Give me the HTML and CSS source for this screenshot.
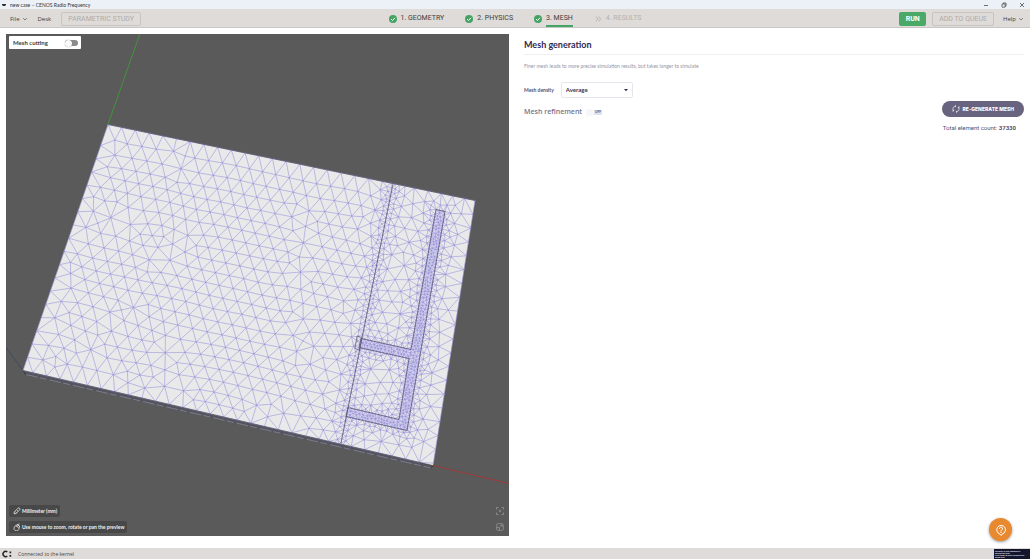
FILE: index.html
```html
<!DOCTYPE html>
<html lang="en">
<head>
<meta charset="utf-8">
<title>new case – CENOS Radio Frequency</title>
<link rel="stylesheet" href="styles.css">
</head>
<body>
<header class="titlebar">
  <svg class="app-icon" viewBox="0 0 6 6"><path d="M1 2h4v1L4 4H2L1 3z" fill="#333"/></svg>
  <span class="window-title">new case – CENOS Radio Frequency</span>
  <div class="window-controls">
    <button aria-label="Minimize"><svg viewBox="0 0 6 6"><path d="M1 3.5h4"/></svg></button>
    <button aria-label="Restore"><svg viewBox="0 0 6 6"><rect x="1" y="2" width="3.2" height="3.2" rx=".5"/><path d="M2 1.7V1h3v3.2h-.6"/></svg></button>
    <button aria-label="Close"><svg viewBox="0 0 6 6"><path d="M1 1l4 4M5 1L1 5"/></svg></button>
  </div>
</header>
<nav class="toolbar">
  <div class="tools">
    <button class="menu">File <svg class="chevron" viewBox="0 0 6 6"><path d="M1.2 2.2L3 4l1.8-1.8"/></svg></button>
    <button class="menu">Desk</button>
    <button class="outlined" disabled>PARAMETRIC STUDY</button>
  </div>
  <div class="steps">
    <button class="step"><svg viewBox="0 0 8 8"><circle cx="4" cy="4" r="4" fill="#43a463"/><path d="M2 4.1l1.5 1.4L6 2.8"/></svg><span>1. GEOMETRY</span></button>
    <button class="step"><svg viewBox="0 0 8 8"><circle cx="4" cy="4" r="4" fill="#43a463"/><path d="M2 4.1l1.5 1.4L6 2.8"/></svg><span>2. PHYSICS</span></button>
    <button class="step active"><svg viewBox="0 0 8 8"><circle cx="4" cy="4" r="4" fill="#43a463"/><path d="M2 4.1l1.5 1.4L6 2.8"/></svg><span>3. MESH</span></button>
    <button class="step pending" disabled><svg viewBox="0 0 8 8"><path d="M1.5 1.5h1l2 2.5-2 2.5h-1L3.200 4zM4.200 1.500h1l2 2.500-2 2.500h-1L5.900 4z"/></svg><span>4. RESULTS</span></button>
  </div>
  <div class="tools end">
    <button class="run">RUN</button>
    <button class="outlined" disabled>ADD TO QUEUE</button>
    <button class="menu">Help <svg class="chevron" viewBox="0 0 6 6"><path d="M1.200 2.200L3 4l1.800-1.800"/></svg></button>
  </div>
</nav>
<main class="workspace">
  <section class="viewport" aria-label="Mesh preview">
    <svg class="scene" viewBox="6 34 503 503" preserveAspectRatio="xMidYMid slice">
      <path d="M108 125L140 34" stroke="#3f9a3a" stroke-width=".9"/>
      <path d="M0 340L23 371" stroke="#34495e" stroke-width=".7"/>
      <path d="M433 466L515 485.500" stroke="#b03030" stroke-width=".8"/>
      <path d="M23 371L433 466L431 469L26 375.500Z" fill="#54545c"/>
      <path d="M26 375L431 468.500" stroke="#8d8ca8" stroke-width=".7" stroke-dasharray="12 2 7 3"/>
      <path d="M23 371L26 375.500M433 466L431 469" stroke="#222" stroke-width=".6"/>
      <path d="M108 125L475 201L433 466L23 371Z" fill="#e9e9ea"/>
      <path d="M436 210L445 212L407 431L346 417L348 408L399 420L409 359L359 348L361 339L411 350Z" fill="#d8d6ee"/>
      <path id="mesh" fill="none" stroke="#9a95da" stroke-width=".6"/>
      <path id="nodes" fill="none" stroke="#8f89d6" stroke-width="1.400" stroke-linecap="round" stroke-opacity=".5"/>
      <g fill="none" stroke="#55536a" stroke-width=".7">
        <path d="M393 184L341 443.500"/>
        <path d="M436 210L445 212L407 431L346 417L348 408L399 420L409 359L359 348L361 339L411 350Z"/>
        <path d="M357 336.500L362 338L359.500 350.500L355 349Z"/>
      </g>
      <path d="M108 125L475 201M23 371L433 466" stroke="#333" stroke-width=".5"/>
    </svg>
    <div class="overlay">
      <label class="cutting">Mesh cutting <input type="checkbox" class="toggle"></label>
      <div class="overlay-bottom">
        <div class="chips">
          <button class="chip"><svg viewBox="0 0 8 8"><path d="M1 6.800l.4-2L5 1.200a1 1 0 0 1 1.500 0l.2.2a1 1 0 0 1 0 1.500L3 6.500zM2.500 4.800l1 .9M4 3.300l1 .9"/></svg>Millimeter (mm)</button>
          <div class="chip"><svg viewBox="0 0 8 8"><path d="M1.200 4.500a2.500 2.500 0 1 0 4.800 1L6.600 3 4 1.800 1.600 3.500zM2.800 2.700L5.500 4.700M4 1.800L6.500.8M4.500 3.500l1-1"/></svg>Use mouse to zoom, rotate or pan the preview</div>
        </div>
        <div class="view-tools">
          <button aria-label="Center view"><svg viewBox="0 0 8 8"><path d="M.5 2.500v-2h2M5.500.5h2v2M7.500 5.500v2h-2M2.500 7.500h-2v-2"/><circle cx="4" cy="4" r=".8"/></svg></button>
          <button aria-label="Expand view"><svg viewBox="0 0 8 8"><rect x=".7" y=".7" width="6.600" height="6.600" rx="1"/><path d="M4.300 2h1.800v1.800M6 2L4.200 3.800M.8 4.500h2.700v2.700"/></svg></button>
        </div>
      </div>
    </div>
  </section>
  <section class="settings">
    <h1>Mesh generation</h1>
    <p class="hint">Finer mesh leads to more precise simulation results, but takes longer to simulate</p>
    <div class="columns">
      <div class="fields">
        <div class="field">
          <label for="density">Mesh density</label>
          <div class="select">
            <select id="density"><option>Average</option></select>
            <svg viewBox="0 0 6 6"><path d="M1 2h4L3 4.300z"/></svg>
          </div>
        </div>
        <div class="refine">
          <h2 id="refinement">Mesh refinement</h2>
          <button class="switch" role="switch" aria-checked="false" aria-labelledby="refinement"><i></i><span>OFF</span></button>
        </div>
      </div>
      <div class="actions">
        <button class="regenerate"><svg viewBox="0 0 9 9"><path d="M1.800 6.800C.2 4.800 1 1.500 4.400 1.300M3.200.2l1.200 1.100-1.100 1.200M7.200 2.200C8.800 4.200 8 7.500 4.600 7.700M5.800 8.800L4.600 7.700l1.100-1.200M1.800 6.800v-1.600M1.800 6.800H.3M7.200 2.200v1.600M7.200 2.200h1.500"/></svg>RE-GENERATE MESH</button>
        <p>Total element count: <b>37330</b></p>
      </div>
    </div>
    <button class="help" aria-label="Help"><svg viewBox="0 0 12 12"><path d="M6 11.200L4.800 10A4.400 4.400 0 1 1 7.500 10zM4.500 4.600a1.500 1.500 0 1 1 2.200 1.300Q6 6.300 6 7"/><path d="M6 8.200v.4"/></svg></button>
  </section>
</main>
<footer class="status">
  <svg class="brand" viewBox="0 0 12 8"><path d="M6.300 2A2.600 2.600 0 1 0 6.300 6" fill="none" stroke="#222" stroke-width="1.500"/><path d="M8.500 1.500h1.700v1.700H8.500zM8.500 5h1.700v1.700H8.500z" fill="#222"/></svg>
  <span>Connected to the kernel</span>
  <div class="thumbnail">Security or site padding of<br>supporting test<br>GHz today at next element test<br>Show text</div>
</footer>
<script src="mesh.js"></script>
</body>
</html>
```
FILE: styles.css
```css
* { box-sizing: border-box; }
html, body { height: 100%; }
body {
  margin: 0;
  display: flex;
  flex-direction: column;
  background: #fff;
  color: #3d3d3d;
  font: 6px/8px Lato, "Open Sans", sans-serif;
}
button, select, input { font: inherit; color: inherit; margin: 0; }
button { border: 0; padding: 0; background: none; }
svg { display: block; flex: none; }

.titlebar {
  flex: none;
  height: 9px;
  display: flex;
  align-items: center;
  gap: 3px;
  padding: 0 5px 0 1px;
  background: #ebf1f6;
  color: #333;
}
.app-icon { width: 6px; height: 6px; }
.window-title { font-size: 5px; font-family: Lato, sans-serif; }
.window-controls { margin-left: auto; display: flex; gap: 12px; }
.window-controls svg { width: 6px; height: 6px; fill: none; stroke: #333; stroke-width: .7; }

.toolbar {
  flex: none;
  height: 19px;
  display: grid;
  grid-template-columns: 1fr auto 1fr;
  align-items: center;
  padding-top: 1px;
  background: #dfdbd8;
  border-bottom: 1px solid #c9c6c4;
  font-family: Roboto, sans-serif;
}
.tools { display: flex; align-items: center; gap: 10px; padding-left: 10px; }
.tools.end { justify-content: flex-end; gap: 6px; padding: 0 6px 0 0; }
.tools.end .menu { margin-left: 3px; }
.menu { display: flex; align-items: center; gap: 2px; font-family: "Open Sans", sans-serif; }
.chevron { width: 6px; height: 6px; fill: none; stroke: #555; stroke-width: .7; }
.outlined {
  height: 14px;
  padding: 0 6px;
  border: 1px solid #c7c4c2;
  border-radius: 2px;
  color: #aeabaa;
  font-size: 7px;
}
.run {
  width: 27px;
  height: 14px;
  border-radius: 2px;
  background: #4aa967;
  color: #fff;
  font-size: 7px;
  font-weight: 700;
}
.steps { display: flex; gap: 21px; align-self: stretch; }
.step { display: flex; align-items: center; gap: 4px; font-size: 7px; }
.step svg { width: 8px; height: 8px; }
.step path { fill: none; stroke: #fff; stroke-width: 1; }
.step span { height: 17px; line-height: 17px; }
.step.active span { box-shadow: inset 0 -2px #43a463; }
.step.pending { color: #b4b1af; }
.step.pending path { fill: #bebbb9; stroke: none; }

.workspace {
  flex: 1;
  min-height: 0;
  display: grid;
  grid-template-columns: 503fr 507fr;
  gap: 14px;
  padding: 6px 0 12px 6px;
}
.viewport { position: relative; min-height: 0; background: #5a5a5a; overflow: hidden; }
.scene { position: absolute; width: 100%; height: 100%; }
.overlay {
  position: absolute;
  inset: 0;
  display: flex;
  flex-direction: column;
  justify-content: space-between;
  align-items: stretch;
  padding: 2px 3px 3px;
}
.cutting {
  align-self: flex-start;
  height: 13px;
  display: flex;
  align-items: center;
  gap: 17px;
  padding: 0 3px 0 4px;
  border-radius: 1px;
  background: #fff;
  font-weight: 700;
}
.toggle {
  appearance: none;
  width: 13px;
  height: 6px;
  border-radius: 3px;
  background: #8c8c8c;
}
.toggle::before {
  content: "";
  display: block;
  width: 7px;
  height: 7px;
  border-radius: 50%;
  background: #fafafa;
  box-shadow: 0 0 1px #777;
}
.overlay-bottom { display: flex; justify-content: space-between; align-items: flex-end; }
.chips { display: flex; flex-direction: column; align-items: flex-start; gap: 4px; }
.chip {
  height: 12px;
  display: flex;
  align-items: center;
  gap: 1px;
  padding: 0 3px 0 4px;
  border-radius: 2px;
  background: #484848;
  color: #f0f0f0;
  font: 700 5px/8px Lato, sans-serif;
}
.chip svg { width: 8px; height: 8px; fill: none; stroke: #fff; stroke-width: .7; }
.view-tools { display: flex; flex-direction: column; gap: 8px; padding: 0 2px 2px 0; }
.view-tools svg { width: 8px; height: 8px; fill: none; stroke: #9b9b9b; stroke-width: .7; }

.settings {
  position: relative;
  min-width: 0;
  padding: 5px 6px 0 1px;
  color: #55516f;
}
h1 {
  margin: 0;
  padding-bottom: 3px;
  border-bottom: 1px solid #f0f0f2;
  color: #2f2a51;
  font: 700 9px/12px Lato, sans-serif;
}
.hint { margin: 7px 0 12px; color: #96959f; font-size: 5px; }
.columns { display: flex; justify-content: space-between; align-items: flex-start; }
.field { display: flex; align-items: center; gap: 7px; font-size: 5px; font-weight: 700; }
.select { position: relative; width: 72px; }
.select select {
  appearance: none;
  width: 100%;
  height: 16px;
  padding: 0 4px;
  border: 1px solid #e6e6ec;
  border-radius: 2px;
  background: #fff;
  color: #38334f;
  font-size: 6px;
  font-weight: 700;
}
.select svg { position: absolute; right: 4px; top: 5px; width: 6px; height: 6px; fill: #38334f; pointer-events: none; }
.refine { display: flex; align-items: center; gap: 4px; margin-top: 8px; }
h2 { margin: 0; font: 600 7px/12px "Open Sans", sans-serif; color: #77748d; }
.switch {
  display: flex;
  align-items: center;
  height: 5px;
  background: #e3e2ea;
  border-radius: 1px;
  font-size: 3px;
  font-weight: 700;
}
.switch i { width: 8px; height: 7px; border-radius: 2px; background: #f7f7f9; }
.switch span { padding: 0 1px; }
.actions { display: flex; flex-direction: column; align-items: flex-end; padding-top: 19px; }
.regenerate {
  height: 16px;
  display: flex;
  align-items: center;
  gap: 3px;
  padding: 0 10px;
  border-radius: 8px;
  background: #68637f;
  color: #fff;
  font: 800 5px/8px Inter, sans-serif;
}
.regenerate svg { width: 8px; height: 8px; fill: none; stroke: #fff; stroke-width: .7; }
.actions p { margin: 7px 8px 0 0; font-family: Roboto, sans-serif; }
.help {
  position: absolute;
  right: 18px;
  bottom: -5px;
  width: 23px;
  height: 23px;
  display: grid;
  place-items: center;
  border-radius: 50%;
  background: #e9892f;
  box-shadow: 0 1px 3px rgba(0, 0, 0, .4);
}
.help svg { width: 12px; height: 12px; fill: none; stroke: #fff; stroke-width: 1; stroke-linecap: round; }

.status {
  flex: none;
  height: 11px;
  display: flex;
  align-items: center;
  gap: 5px;
  padding: 1px 0 0 1px;
  background: #dfdbd8;
  font-size: 5px;
  color: #444;
}
.status span { font-family: "Open Sans", sans-serif; }
.brand { width: 12px; height: 8px; }
.thumbnail {
  align-self: flex-end;
  width: 36px;
  height: 10px;
  margin-left: auto;
  overflow: hidden;
  white-space: nowrap;
  background: #14162e;
  color: #e4e6f2;
  font: 700 2px/2px "Liberation Sans", sans-serif;
  padding: 1px;
}
```
FILE: mesh.js
```js
// Builds a graded triangular surface mesh of the board and its antenna trace.
let seed = 11;
const rnd = () => (seed = (seed * 16807) % 2147483647) / 2147483647;
const board = [[108, 125], [475, 201], [433, 466], [23, 371]];
const trace = [[436, 210], [445, 212], [407, 431], [346, 417], [348, 408], [399, 420], [409, 359], [359, 348], [361, 339], [411, 350]];
const split = [[393, 184], [341, 443.5]];

function inside(poly, x, y) {
  let c = false;
  for (let i = 0, j = poly.length - 1; i < poly.length; j = i++) {
    const [a, b] = poly[i], [p, q] = poly[j];
    if (b > y !== q > y && x < ((p - a) * (y - b)) / (q - b) + a) c = !c;
  }
  return c;
}
function segDist(x, y, [a, b], [p, q]) {
  const dx = p - a, dy = q - b;
  const t = Math.max(0, Math.min(1, ((x - a) * dx + (y - b) * dy) / (dx * dx + dy * dy)));
  return Math.hypot(x - a - t * dx, y - b - t * dy);
}
function polyDist(x, y) {
  let d = 1e9;
  trace.forEach((p, i) => { d = Math.min(d, segDist(x, y, p, trace[(i + 1) % trace.length])); });
  return d;
}
function size(x, y) {
  if (inside(trace, x, y)) return 2.9;
  const s = segDist(x, y, split[0], split[1]);
  return Math.min(14, 3.6 + Math.max(0, polyDist(x, y) - 2) * 0.55, 4.4 + Math.max(0, s - 4) * 0.6);
}

const points = [];
const cells = new Map();
const cell = (x, y) => Math.floor(x / 14) * 1000 + Math.floor(y / 14);
function add(x, y, fixed, k = 0.85) {
  const r = size(x, y) * k;
  for (let i = -1; i < 2; i++) for (let j = -1; j < 2; j++)
    for (const p of cells.get(cell(x + i * 14, y + j * 14)) || [])
      if (Math.hypot(p.x - x, p.y - y) < r) return;
  const p = { x, y, fixed };
  points.push(p);
  const key = cell(x, y);
  if (!cells.has(key)) cells.set(key, []);
  cells.get(key).push(p);
}
function line(a, b) {
  const len = Math.hypot(b[0] - a[0], b[1] - a[1]);
  for (let s = 0; s < len;) {
    const x = a[0] + ((b[0] - a[0]) * s) / len, y = a[1] + ((b[1] - a[1]) * s) / len;
    add(x, y, true, 0.6);
    s += size(x, y);
  }
  add(b[0], b[1], true, 0.4);
}
board.forEach((p, i) => line(p, board[(i + 1) % 4]));
trace.forEach((p, i) => line(p, trace[(i + 1) % trace.length]));
line(split[0], split[1]);

// Regular rows in the open area, then random filling where the mesh is finer.
for (let v = 0.02; v < 1; v += 0.045)
  for (let u = (Math.round(v / 0.045) % 2) * 0.018 + 0.02; u < 1; u += 0.036) {
    const lx = 108 - 85 * v, ly = 125 + 246 * v, rx = 475 - 42 * v, ry = 201 + 265 * v;
    const x = lx + (rx - lx) * u + (rnd() - 0.5) * 6, y = ly + (ry - ly) * u + (rnd() - 0.5) * 6;
    if (inside(board, x, y) && size(x, y) > 12) add(x, y, false, 0.7);
  }
for (let i = 0; i < 30000; i++) {
  const x = 340 + rnd() * 110, y = 200 + rnd() * 235;
  if (inside(trace, x, y)) add(x, y, true);
}
for (let i = 0; i < 90000; i++) {
  const x = 23 + rnd() * 452, y = 125 + rnd() * 341;
  if (inside(board, x, y)) add(x, y, false);
}

function circle(a, b, c) {
  const p = points[a], q = points[b], r = points[c];
  const d = 2 * (p.x * (q.y - r.y) + q.x * (r.y - p.y) + r.x * (p.y - q.y)) || 1e-9;
  const P = p.x * p.x + p.y * p.y, Q = q.x * q.x + q.y * q.y, R = r.x * r.x + r.y * r.y;
  const x = (P * (q.y - r.y) + Q * (r.y - p.y) + R * (p.y - q.y)) / d;
  const y = (P * (r.x - q.x) + Q * (p.x - r.x) + R * (q.x - p.x)) / d;
  return { a, b, c, x, y, r: (p.x - x) ** 2 + (p.y - y) ** 2 };
}
function triangulate() {
  const n = points.length;
  const order = points.map((_, i) => i).sort((i, j) => points[i].x - points[j].x);
  points.push({ x: -9000, y: -8000 }, { x: 9000, y: -8100 }, { x: 310, y: 12000 });
  let open = [circle(n, n + 1, n + 2)];
  const done = [];
  for (const i of order) {
    const { x, y } = points[i], edges = new Map(), keep = [];
    for (const t of open) {
      const dx = x - t.x;
      if (dx > 0 && dx * dx > t.r) { done.push(t); continue; }
      if (dx * dx + (y - t.y) ** 2 >= t.r) { keep.push(t); continue; }
      for (const [p, q] of [[t.a, t.b], [t.b, t.c], [t.c, t.a]]) {
        const key = Math.min(p, q) * 100000 + Math.max(p, q);
        if (edges.has(key)) edges.delete(key); else edges.set(key, [p, q]);
      }
    }
    open = keep;
    for (const [p, q] of edges.values()) open.push(circle(p, q, i));
  }
  points.length = n;
  const links = new Map();
  for (const t of done.concat(open)) {
    if (t.a >= n || t.b >= n || t.c >= n) continue;
    for (const [p, q] of [[t.a, t.b], [t.b, t.c], [t.c, t.a]])
      links.set(Math.min(p, q) * 100000 + Math.max(p, q), [p, q]);
  }
  return [...links.values()];
}

let edges = triangulate();
for (let pass = 0; pass < 3; pass++) {
  const sums = points.map(() => [0, 0, 0]);
  for (const [p, q] of edges) for (const [i, j] of [[p, q], [q, p]]) {
    sums[i][0] += points[j].x; sums[i][1] += points[j].y; sums[i][2]++;
  }
  points.forEach((p, i) => {
    if (p.fixed) return;
    p.x += (sums[i][0] / sums[i][2] - p.x) * 0.6;
    p.y += (sums[i][1] / sums[i][2] - p.y) * 0.6;
  });
  edges = triangulate();
}
const at = p => p.x.toFixed(1) + " " + p.y.toFixed(1);
document.getElementById("mesh").setAttribute("d", edges.map(([p, q]) => "M" + at(points[p]) + "L" + at(points[q])).join(""));
document.getElementById("nodes").setAttribute("d", points.map(p => "M" + at(p) + "h.01").join(""));
```
